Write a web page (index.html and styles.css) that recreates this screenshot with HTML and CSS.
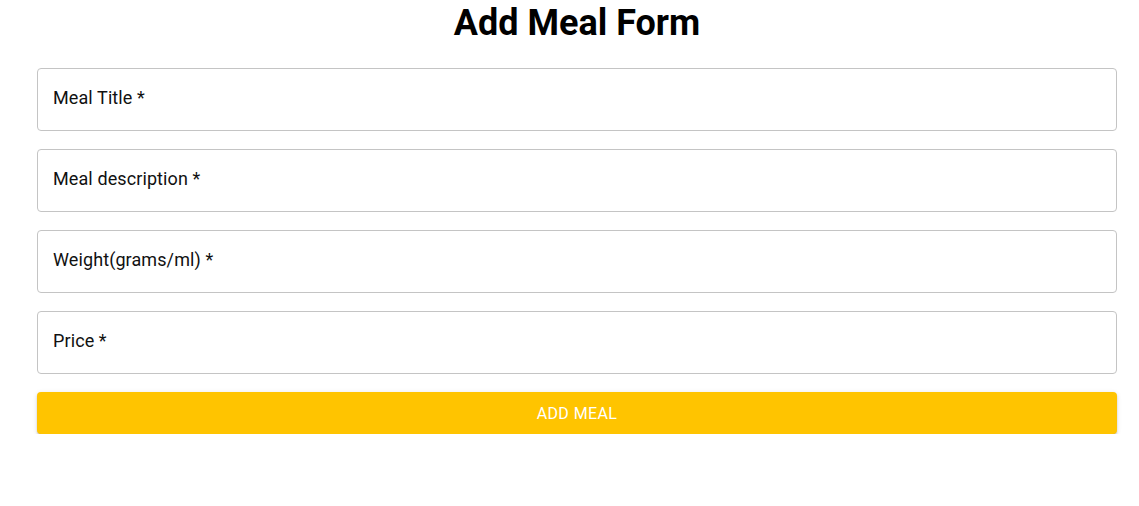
FILE: index.html
```html
<!DOCTYPE html>
<html lang="en">
<head>
<meta charset="utf-8">
<title>Add Meal Form</title>
<link rel="stylesheet" href="styles.css">
</head>
<body>
<main class="page">
  <h1 class="title">Add Meal Form</h1>
  <form class="meal-form">
    <input class="field" type="text" placeholder="Meal Title *">
    <input class="field" type="text" placeholder="Meal description *">
    <input class="field" type="text" placeholder="Weight(grams/ml) *">
    <input class="field" type="text" placeholder="Price *">
    <button class="submit" type="button">Add Meal</button>
  </form>
</main>
</body>
</html>
```
FILE: styles.css
```css
html, body {
  margin: 0;
  padding: 0;
  background: #fff;
}

body {
  font-family: Roboto, "Liberation Sans", Arial, sans-serif;
  color: rgba(0, 0, 0, 0.87);
}

.page {
  padding: 2px 22px 0 37px;
}

.title {
  margin: 0 0 24px;
  font-size: 36px;
  font-weight: 700;
  line-height: 42px;
  text-align: center;
  color: #000;
}

.meal-form {
  display: flex;
  flex-direction: column;
  gap: 18px;
}

.field {
  box-sizing: border-box;
  height: 63px;
  margin: 0;
  padding: 0 15px 4px;
  border: 1px solid #c4c4c4;
  border-radius: 4px;
  font-family: Roboto, "Liberation Sans", Arial, sans-serif;
  font-size: 18px;
  letter-spacing: 0.1px;
  color: #111;
  background: #fff;
  outline: none;
}

.field::placeholder {
  color: #111;
  opacity: 1;
}

.submit {
  box-sizing: border-box;
  height: 42px;
  margin: 0;
  border: 0;
  border-radius: 4px;
  background: #ffc400;
  color: #fff;
  font-family: Roboto, "Liberation Sans", Arial, sans-serif;
  font-size: 16px;
  font-weight: 400;
  letter-spacing: 0.4px;
  text-transform: uppercase;
  box-shadow: 0 3px 1px -2px rgba(0,0,0,0.2), 0 2px 2px 0 rgba(0,0,0,0.14), 0 1px 5px 0 rgba(0,0,0,0.12);
  cursor: pointer;
}
```
